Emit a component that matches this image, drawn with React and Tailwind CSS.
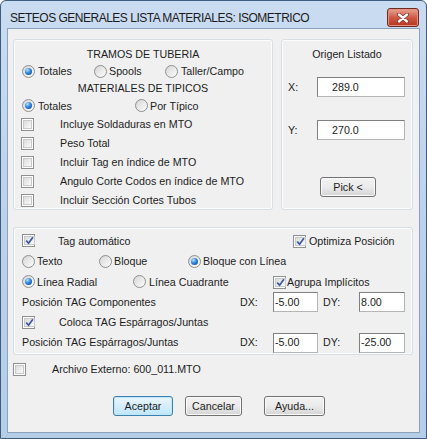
import React from 'react';

function Radio({ on }) {
  return (
    <span className="w-[13px] h-[13px] shrink-0 rounded-full border border-[#8e8f8f] bg-linear-to-br from-[#d6d6d6] to-[#fdfdfd] flex items-center justify-center">
      {on && (
        <span className="w-[7px] h-[7px] rounded-full bg-[radial-gradient(circle_at_35%_30%,#b6e3ff_0%,#2a86e0_45%,#0b3f88_100%)]" />
      )}
    </span>
  );
}

function Check({ on }) {
  return (
    <span className="w-[13px] h-[13px] shrink-0 border border-[#8e8f8f] bg-white p-[1px] flex">
      <span className="flex-1 border border-[#c9c9c9] bg-linear-to-br from-[#dcdcdc] to-[#fafafa] flex items-center justify-center">
        {on && (
          <svg width="9" height="9" viewBox="0 0 9 9">
            <path d="M1.2 4.6 L3.6 7.2 L7.9 1.2" stroke="#3a5aa6" strokeWidth="1.7" fill="none" />
          </svg>
        )}
      </span>
    </span>
  );
}

function Opt({ on, label, w, gap = 'ml-[3px]' }) {
  return (
    <div className={`flex items-center shrink-0 ${w}`}>
      <Radio on={on} />
      <span className={gap}>{label}</span>
    </div>
  );
}

function Field({ value, w, pad = 'pl-[1px]' }) {
  return (
    <div className={`h-[20px] ${w} border border-[#7f7f7f] border-r-[#b5b5b5] border-b-[#b5b5b5] bg-white flex items-center ${pad}`}>
      {value}
    </div>
  );
}

function Btn({ label, w, def }) {
  return (
    <button
      className={`h-[20px] ${w} rounded-[3px] border flex items-center justify-center ${
        def
          ? 'border-[#3c7fb1] bg-linear-to-b from-[#eaf6fd] to-[#bee6fd] shadow-[inset_0_0_0_1px_#bfe7fb]'
          : 'border-[#707070] bg-linear-to-b from-[#f2f2f2] via-[#ebebeb] to-[#d4d4d4] shadow-[inset_0_0_0_1px_#fcfcfc]'
      }`}
    >
      {label}
    </button>
  );
}

function CheckRow({ label }) {
  return (
    <div className="h-[19px] flex items-center pl-[7px]">
      <Check />
      <span className="ml-[26px]">{label}</span>
    </div>
  );
}

function Offsets({ label, dx, dy }) {
  return (
    <div className="flex items-center pl-[8px]">
      <span className="w-[218px]">{label}</span>
      <span className="w-[33px]">DX:</span>
      <Field value={dx} w="w-[45px]" />
      <span className="ml-[5px] w-[36px]">DY:</span>
      <Field value={dy} w="w-[46px]" />
    </div>
  );
}

export default function App() {
  return (
    <div className="w-[427px] h-[439px] font-['Liberation_Sans',Arial,sans-serif] text-[10.7px] text-[#1c1c1c]">
      <div className="w-[427px] h-[439px] rounded-t-[6px] border border-[#3e5c7e] bg-linear-to-b from-[#cadcf1] via-[#bcd2eb] to-[#b6cde8] flex flex-col">
        <div className="h-[27px] flex items-start justify-between pl-[9px] pr-[7px]">
          <span className="mt-[8px] text-[12px] tracking-[-0.5px] text-[#1b1b1b]">
            SETEOS GENERALES LISTA MATERIALES: ISOMETRICO
          </span>
          <div className="mt-[7px] w-[32px] h-[19px] rounded-[3px] border border-[#6b2a22] bg-linear-to-b from-[#e4a493] via-[#cf5a45] to-[#b8321c] flex items-center justify-center shadow-[inset_0_0_0_1px_#e98f7d]">
            <svg width="12" height="10" viewBox="0 0 12 10">
              <path d="M2 1.5 L10 8.5 M10 1.5 L2 8.5" stroke="#5a1a10" strokeWidth="3.6" strokeLinecap="round" />
              <path d="M2 1.5 L10 8.5 M10 1.5 L2 8.5" stroke="#ffffff" strokeWidth="2.4" strokeLinecap="round" />
            </svg>
          </div>
        </div>

        <div className="mx-[6px] h-[405px] border border-[#8ba2bd] bg-[#f0f0f0]">
          <div className="flex gap-[8px] pl-[5px] pt-[10px]">
            <div className="w-[260px] h-[171px] rounded-[3px] border border-[#d5dfe5] shadow-[inset_0_0_0_1px_#fbfcfd] pt-[6px]">
              <div className="h-[17px] flex items-center justify-center">TRAMOS DE TUBERIA</div>
              <div className="h-[17px] flex items-center pl-[8px]">
                <Opt on label="Totales" w="w-[72px]" />
                <Opt label="Spools" w="w-[71px]" gap="ml-[2px]" />
                <Opt label="Taller/Campo" w="w-[90px]" />
              </div>
              <div className="h-[17px] flex items-center justify-center">MATERIALES DE TIPICOS</div>
              <div className="h-[18px] flex items-center pl-[8px]">
                <Opt on label="Totales" w="w-[113px]" />
                <Opt label="Por Típico" w="w-[80px]" gap="ml-[2px]" />
              </div>
              <CheckRow label="Incluye Soldaduras en MTO" />
              <CheckRow label="Peso Total" />
              <CheckRow label="Incluir Tag en índice de MTO" />
              <CheckRow label="Angulo Corte Codos en índice de MTO" />
              <CheckRow label="Incluir Sección Cortes Tubos" />
            </div>

            <div className="w-[132px] h-[171px] rounded-[3px] border border-[#d5dfe5] shadow-[inset_0_0_0_1px_#fbfcfd] pt-[6px]">
              <div className="h-[17px] flex items-center justify-center">Origen Listado</div>
              <div className="mt-[14px] flex items-center pl-[6px]">
                <span className="w-[29px]">X:</span>
                <Field value="289.0" w="w-[88px]" pad="pl-[14px]" />
              </div>
              <div className="mt-[23px] flex items-center pl-[6px]">
                <span className="w-[29px]">Y:</span>
                <Field value="270.0" w="w-[88px]" pad="pl-[14px]" />
              </div>
              <div className="mt-[37px] flex justify-center pl-[2px]">
                <Btn label="Pick <" w="w-[56px]" />
              </div>
            </div>
          </div>

          <div className="ml-[5px] mt-[17px] w-[400px] h-[128px] rounded-[3px] border border-[#d5dfe5] shadow-[inset_0_0_0_1px_#fbfcfd] pt-[3px]">
            <div className="h-[20px] flex items-center pl-[8px]">
              <div className="w-[271px] flex items-center">
                <Check on />
                <span className="ml-[23px]">Tag automático</span>
              </div>
              <Check on />
              <span className="ml-[3px]">Optimiza Posición</span>
            </div>
            <div className="h-[21px] flex items-center pl-[8px]">
              <Opt label="Texto" w="w-[77px]" gap="ml-[2px]" />
              <Opt label="Bloque" w="w-[89px]" gap="ml-[2px]" />
              <Opt on label="Bloque con Línea" w="w-[120px]" gap="ml-[2px]" />
            </div>
            <div className="h-[20px] flex items-center pl-[8px]">
              <Opt on label="Línea Radial" w="w-[111px]" gap="ml-[2px]" />
              <Opt label="Línea Cuadrante" w="w-[140px]" gap="ml-[3px]" />
              <Check on />
              <span className="ml-[1px]">Agrupa Implícitos</span>
            </div>
            <div className="h-[20px] flex items-center">
              <Offsets label="Posición TAG Componentes" dx="-5.00" dy="8.00" />
            </div>
            <div className="h-[20px] flex items-center pl-[8px]">
              <Check on />
              <span className="ml-[24px]">Coloca TAG Espárragos/Juntas</span>
            </div>
            <div className="h-[21px] flex items-center">
              <Offsets label="Posición TAG Espárragos/Juntas" dx="-5.00" dy="-25.00" />
            </div>
          </div>

          <div className="mt-[7px] ml-[5px] h-[14px] flex items-center">
            <Check />
            <span className="ml-[26px]">Archivo Externo: 600_011.MTO</span>
          </div>

          <div className="mt-[20px] ml-[105px] flex">
            <Btn def label="Aceptar" w="w-[60px]" />
            <div className="ml-[12px]">
              <Btn label="Cancelar" w="w-[57px]" />
            </div>
            <div className="ml-[22px]">
              <Btn label="Ayuda..." w="w-[61px]" />
            </div>
          </div>
        </div>
      </div>
    </div>
  );
}
